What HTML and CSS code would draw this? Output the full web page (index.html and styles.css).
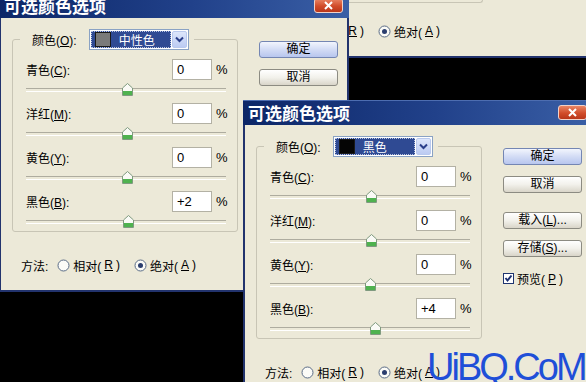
FILE: index.html
```html
<!DOCTYPE html>
<html lang="zh-CN">
<head>
    <meta charset="UTF-8">
    <title>可选颜色选项</title>
    <link rel="stylesheet" href="styles.css">
</head>
<body>
<div class="desk">

    <!-- dialog behind, only its bottom edge shows -->
    <div class="dialog back">
        <div class="body stack">
            <div class="group-end"></div>
            <div class="method">
                <span class="method-label">方法:</span>
                <span class="radio"><svg width="13" height="13" viewBox="0 0 13 13"><circle cx="6.5" cy="6.5" r="5.5" fill="#fbfbf7" stroke="#5a6c86"/></svg>相对(<u>R</u>)</span>
                <span class="radio second-opt"><svg width="13" height="13" viewBox="0 0 13 13"><circle cx="6.5" cy="6.5" r="5.5" fill="#fbfbf7" stroke="#5a6c86"/><circle cx="6.5" cy="6.5" r="2.5" fill="#2b3e6e"/></svg>绝对(<u>A</u>)</span>
            </div>
        </div>
    </div>

    <div class="dialog win1">
        <div class="titlebar">
            <span class="title">可选颜色选项</span>
            <span class="close"><svg width="11" height="9" viewBox="0 0 11 9"><path d="M2 1 L9 8 M9 1 L2 8" stroke="#fff" stroke-width="2"/></svg></span>
        </div>
        <div class="body">
            <div class="main">
                <fieldset class="group">
                    <legend>
                        <span class="lbl">颜色(<u>O</u>):</span>
                        <span class="combo">
                            <span class="sel"><span class="swatch gray"></span>中性色</span>
                            <span class="arrow"><svg width="9" height="7" viewBox="0 0 9 7"><path d="M1 1.5 L4.5 5 L8 1.5" fill="none" stroke="#2a3f8a" stroke-width="2"/></svg></span>
                        </span>
                    </legend>
                    <div class="slider-row">
                        <div class="line"><span class="lbl">青色(<u>C</u>):</span><span class="field">0</span><span class="pct">%</span></div>
                        <div class="track"><span class="thumb" style="left:calc(50% + 1px)"><svg width="11" height="13" viewBox="0 0 11 13"><path d="M5.5 .5 L10.5 5 V12.5 H.5 V5 Z" fill="#fafaf6" stroke="#7f9a7f"/><rect x="1" y="8" width="9" height="4" fill="#4fb24f"/></svg></span></div>
                    </div>
                    <div class="slider-row">
                        <div class="line"><span class="lbl">洋红(<u>M</u>):</span><span class="field">0</span><span class="pct">%</span></div>
                        <div class="track"><span class="thumb" style="left:calc(50% + 1px)"><svg width="11" height="13" viewBox="0 0 11 13"><path d="M5.5 .5 L10.5 5 V12.5 H.5 V5 Z" fill="#fafaf6" stroke="#7f9a7f"/><rect x="1" y="8" width="9" height="4" fill="#4fb24f"/></svg></span></div>
                    </div>
                    <div class="slider-row">
                        <div class="line"><span class="lbl">黄色(<u>Y</u>):</span><span class="field">0</span><span class="pct">%</span></div>
                        <div class="track"><span class="thumb" style="left:calc(50% + 1px)"><svg width="11" height="13" viewBox="0 0 11 13"><path d="M5.5 .5 L10.5 5 V12.5 H.5 V5 Z" fill="#fafaf6" stroke="#7f9a7f"/><rect x="1" y="8" width="9" height="4" fill="#4fb24f"/></svg></span></div>
                    </div>
                    <div class="slider-row">
                        <div class="line"><span class="lbl">黑色(<u>B</u>):</span><span class="field">+2</span><span class="pct">%</span></div>
                        <div class="track"><span class="thumb" style="left:calc(50% + 2px)"><svg width="11" height="13" viewBox="0 0 11 13"><path d="M5.5 .5 L10.5 5 V12.5 H.5 V5 Z" fill="#fafaf6" stroke="#7f9a7f"/><rect x="1" y="8" width="9" height="4" fill="#4fb24f"/></svg></span></div>
                    </div>
                </fieldset>
                <div class="method">
                    <span class="method-label">方法:</span>
                    <span class="radio"><svg width="13" height="13" viewBox="0 0 13 13"><circle cx="6.5" cy="6.5" r="5.5" fill="#fbfbf7" stroke="#5a6c86"/></svg>相对(<u>R</u>)</span>
                    <span class="radio second-opt"><svg width="13" height="13" viewBox="0 0 13 13"><circle cx="6.5" cy="6.5" r="5.5" fill="#fbfbf7" stroke="#5a6c86"/><circle cx="6.5" cy="6.5" r="2.5" fill="#2b3e6e"/></svg>绝对(<u>A</u>)</span>
                </div>
            </div>
            <div class="side">
                <button class="btn default">确定</button>
                <button class="btn">取消</button>
            </div>
        </div>
    </div>

    <div class="dialog win2">
        <div class="titlebar">
            <span class="title">可选颜色选项</span>
            <span class="close"><svg width="11" height="9" viewBox="0 0 11 9"><path d="M2 1 L9 8 M9 1 L2 8" stroke="#fff" stroke-width="2"/></svg></span>
        </div>
        <div class="body">
            <div class="main">
                <fieldset class="group">
                    <legend>
                        <span class="lbl">颜色(<u>O</u>):</span>
                        <span class="combo">
                            <span class="sel"><span class="swatch black"></span>黑色</span>
                            <span class="arrow"><svg width="9" height="7" viewBox="0 0 9 7"><path d="M1 1.5 L4.5 5 L8 1.5" fill="none" stroke="#2a3f8a" stroke-width="2"/></svg></span>
                        </span>
                    </legend>
                    <div class="slider-row">
                        <div class="line"><span class="lbl">青色(<u>C</u>):</span><span class="field">0</span><span class="pct">%</span></div>
                        <div class="track"><span class="thumb" style="left:calc(50% + 1px)"><svg width="11" height="13" viewBox="0 0 11 13"><path d="M5.5 .5 L10.5 5 V12.5 H.5 V5 Z" fill="#fafaf6" stroke="#7f9a7f"/><rect x="1" y="8" width="9" height="4" fill="#4fb24f"/></svg></span></div>
                    </div>
                    <div class="slider-row">
                        <div class="line"><span class="lbl">洋红(<u>M</u>):</span><span class="field">0</span><span class="pct">%</span></div>
                        <div class="track"><span class="thumb" style="left:calc(50% + 1px)"><svg width="11" height="13" viewBox="0 0 11 13"><path d="M5.5 .5 L10.5 5 V12.5 H.5 V5 Z" fill="#fafaf6" stroke="#7f9a7f"/><rect x="1" y="8" width="9" height="4" fill="#4fb24f"/></svg></span></div>
                    </div>
                    <div class="slider-row">
                        <div class="line"><span class="lbl">黄色(<u>Y</u>):</span><span class="field">0</span><span class="pct">%</span></div>
                        <div class="track"><span class="thumb" style="left:calc(50% + 0px)"><svg width="11" height="13" viewBox="0 0 11 13"><path d="M5.5 .5 L10.5 5 V12.5 H.5 V5 Z" fill="#fafaf6" stroke="#7f9a7f"/><rect x="1" y="8" width="9" height="4" fill="#4fb24f"/></svg></span></div>
                    </div>
                    <div class="slider-row">
                        <div class="line"><span class="lbl">黑色(<u>B</u>):</span><span class="field">+4</span><span class="pct">%</span></div>
                        <div class="track"><span class="thumb" style="left:calc(50% + 5px)"><svg width="11" height="13" viewBox="0 0 11 13"><path d="M5.5 .5 L10.5 5 V12.5 H.5 V5 Z" fill="#fafaf6" stroke="#7f9a7f"/><rect x="1" y="8" width="9" height="4" fill="#4fb24f"/></svg></span></div>
                    </div>
                </fieldset>
                <div class="method">
                    <span class="method-label">方法:</span>
                    <span class="radio"><svg width="13" height="13" viewBox="0 0 13 13"><circle cx="6.5" cy="6.5" r="5.5" fill="#fbfbf7" stroke="#5a6c86"/></svg>相对(<u>R</u>)</span>
                    <span class="radio second-opt"><svg width="13" height="13" viewBox="0 0 13 13"><circle cx="6.5" cy="6.5" r="5.5" fill="#fbfbf7" stroke="#5a6c86"/><circle cx="6.5" cy="6.5" r="2.5" fill="#2b3e6e"/></svg>绝对(<u>A</u>)</span>
                </div>
            </div>
            <div class="side">
                <button class="btn default">确定</button>
                <button class="btn">取消</button>
                <button class="btn load">载入(<u>L</u>)...</button>
                <button class="btn">存储(<u>S</u>)...</button>
                <span class="check"><svg width="11" height="11" viewBox="0 0 11 11"><rect x=".5" y=".5" width="10" height="10" fill="#fff" stroke="#1f3570"/><path d="M2.5 5 L4.5 7.5 L8.5 2.5" fill="none" stroke="#1b2f72" stroke-width="2"/></svg>预览(<u>P</u>)</span>
            </div>
        </div>
    </div>

    <div class="mark">UiBQ.CoM</div>
</div>
</body>
</html>
```

FILE: styles.css
```css
* {
    box-sizing: border-box;
}
body {
    margin: 0;
    background: #000;
    font-family: "Liberation Sans", "Noto Sans CJK SC", sans-serif;
    font-size: 12px;
    color: #000;
}
.desk {
    position: relative;
    width: 586px;
    height: 382px;
    overflow: hidden;
}

/* windows */
.dialog {
    position: absolute;
    width: 350px;
    height: 299px;
    display: flex;
    flex-direction: column;
    background: #ece9d8;
}
.win1 {
    left: -1px;
    top: -7px;
}
.win2 {
    left: 243px;
    top: 100px;
}
.back {
    left: 243px;
    top: 0;
    height: 58px;
}
.titlebar {
    flex: none;
    height: 25px;
    display: flex;
    align-items: center;
    justify-content: space-between;
    padding: 0 6px 0 5px;
    background: linear-gradient(to right, #0c2667, #21418a 55%, #3a5fa6);
    box-shadow: inset 0 1px 0 #4d6db0;
}
.title {
    color: #fff;
    font-family: "Noto Sans CJK SC", sans-serif;
    font-size: 17px;
    font-weight: bold;
    line-height: 1;
}
.close {
    width: 29px;
    height: 15px;
    display: flex;
    align-items: center;
    justify-content: center;
    border: 1px solid #f2d2c8;
    border-radius: 3px;
    background: linear-gradient(#e98565, #d14c2a 55%, #b9361a);
}
.body {
    flex: 1;
    display: flex;
    padding-left: 11px;
    border: 2px solid #22336d;
    border-top: none;
}
.stack {
    flex-direction: column;
}
.main {
    width: 226px;
}

/* colour group */
.group {
    margin: 11px 0 0;
    padding: 9px 11px 0 13px;
    border: 1px solid #c8c5b5;
    border-radius: 3px;
    min-width: 0;
}
.group legend {
    display: flex;
    align-items: center;
    height: 21px;
    margin-left: -6px;
    padding: 0 5px 0 12px;
}
.combo {
    display: flex;
    width: 100px;
    height: 21px;
    margin-left: 12px;
    padding: 1px;
    border: 1px solid #8aa2c4;
    background: #fff;
}
.sel {
    flex: 1;
    display: flex;
    align-items: center;
    padding-left: 3px;
    background: #2f4a93;
    border: 1px dotted #b7c3e3;
    color: #fff;
}
.swatch {
    width: 16px;
    height: 15px;
    margin-right: 8px;
    border: 1px solid #1a1a1a;
}
.swatch.gray {
    background: #7a7a7a;
}
.swatch.black {
    background: #050505;
}
.arrow {
    width: 15px;
    margin-left: 1px;
    display: flex;
    align-items: center;
    justify-content: center;
    border: 1px solid #b9c9ee;
    border-radius: 2px;
    background: linear-gradient(#dde6fb, #bccbf2);
}
.slider-row + .slider-row {
    margin-top: 4px;
}
.line {
    display: flex;
    align-items: center;
    height: 21px;
}
.line .lbl {
    flex: 1;
}
.field {
    width: 40px;
    height: 21px;
    padding-left: 4px;
    line-height: 19px;
    font-size: 13px;
    background: #fff;
    border: 1px solid #b3b1a4;
}
.pct {
    width: 10px;
    margin-left: 4px;
    font-size: 13px;
}
.track {
    position: relative;
    height: 19px;
}
.track::before {
    content: "";
    position: absolute;
    left: 0;
    right: 0;
    top: 8px;
    height: 2px;
    border-top: 1px solid #aeac9f;
    border-bottom: 1px solid #fff;
}
.thumb {
    position: absolute;
    top: 3px;
    margin-left: -5px;
    display: flex;
}

/* method row */
.method {
    display: flex;
    align-items: center;
    height: 16px;
    margin: 25px 0 0 9px;
}
.radio {
    display: flex;
    align-items: center;
    gap: 3px;
    margin-left: 9px;
}
.radio.second-opt {
    margin-left: 14px;
}
.group-end {
    width: 227px;
    height: 3px;
    border: 1px solid #c8c5b5;
    border-top: none;
    border-left: none;
    border-radius: 0 0 3px 0;
}
.back .method {
    margin-top: 20px;
}

/* buttons */
.side {
    width: 79px;
    margin-left: 21px;
    padding-top: 23px;
    display: flex;
    flex-direction: column;
}
.btn {
    width: 79px;
    height: 17px;
    padding: 0;
    font-family: "Liberation Sans", "Noto Sans CJK SC", sans-serif;
    font-size: 12px;
    line-height: 15px;
    color: #000;
    border: 1px solid #8c8b82;
    border-radius: 3px;
    background: linear-gradient(#ffffff, #f2f1eb 50%, #d9d5c9);
}
.btn.default {
    border-color: #7486b3;
    background: linear-gradient(#f2f5fd, #d3dcf5 50%, #b8c6ee);
}
.btn + .btn {
    margin-top: 11px;
}
.btn.load {
    margin-top: 19px;
}
.check {
    display: flex;
    align-items: center;
    gap: 3px;
    height: 11px;
    margin-top: 16px;
}

.mark {
    position: absolute;
    left: 427px;
    top: 348px;
    font-family: "Liberation Sans", sans-serif;
    font-size: 38px;
    line-height: 38px;
    letter-spacing: -3px;
    color: #1f4fd8;
}
```
